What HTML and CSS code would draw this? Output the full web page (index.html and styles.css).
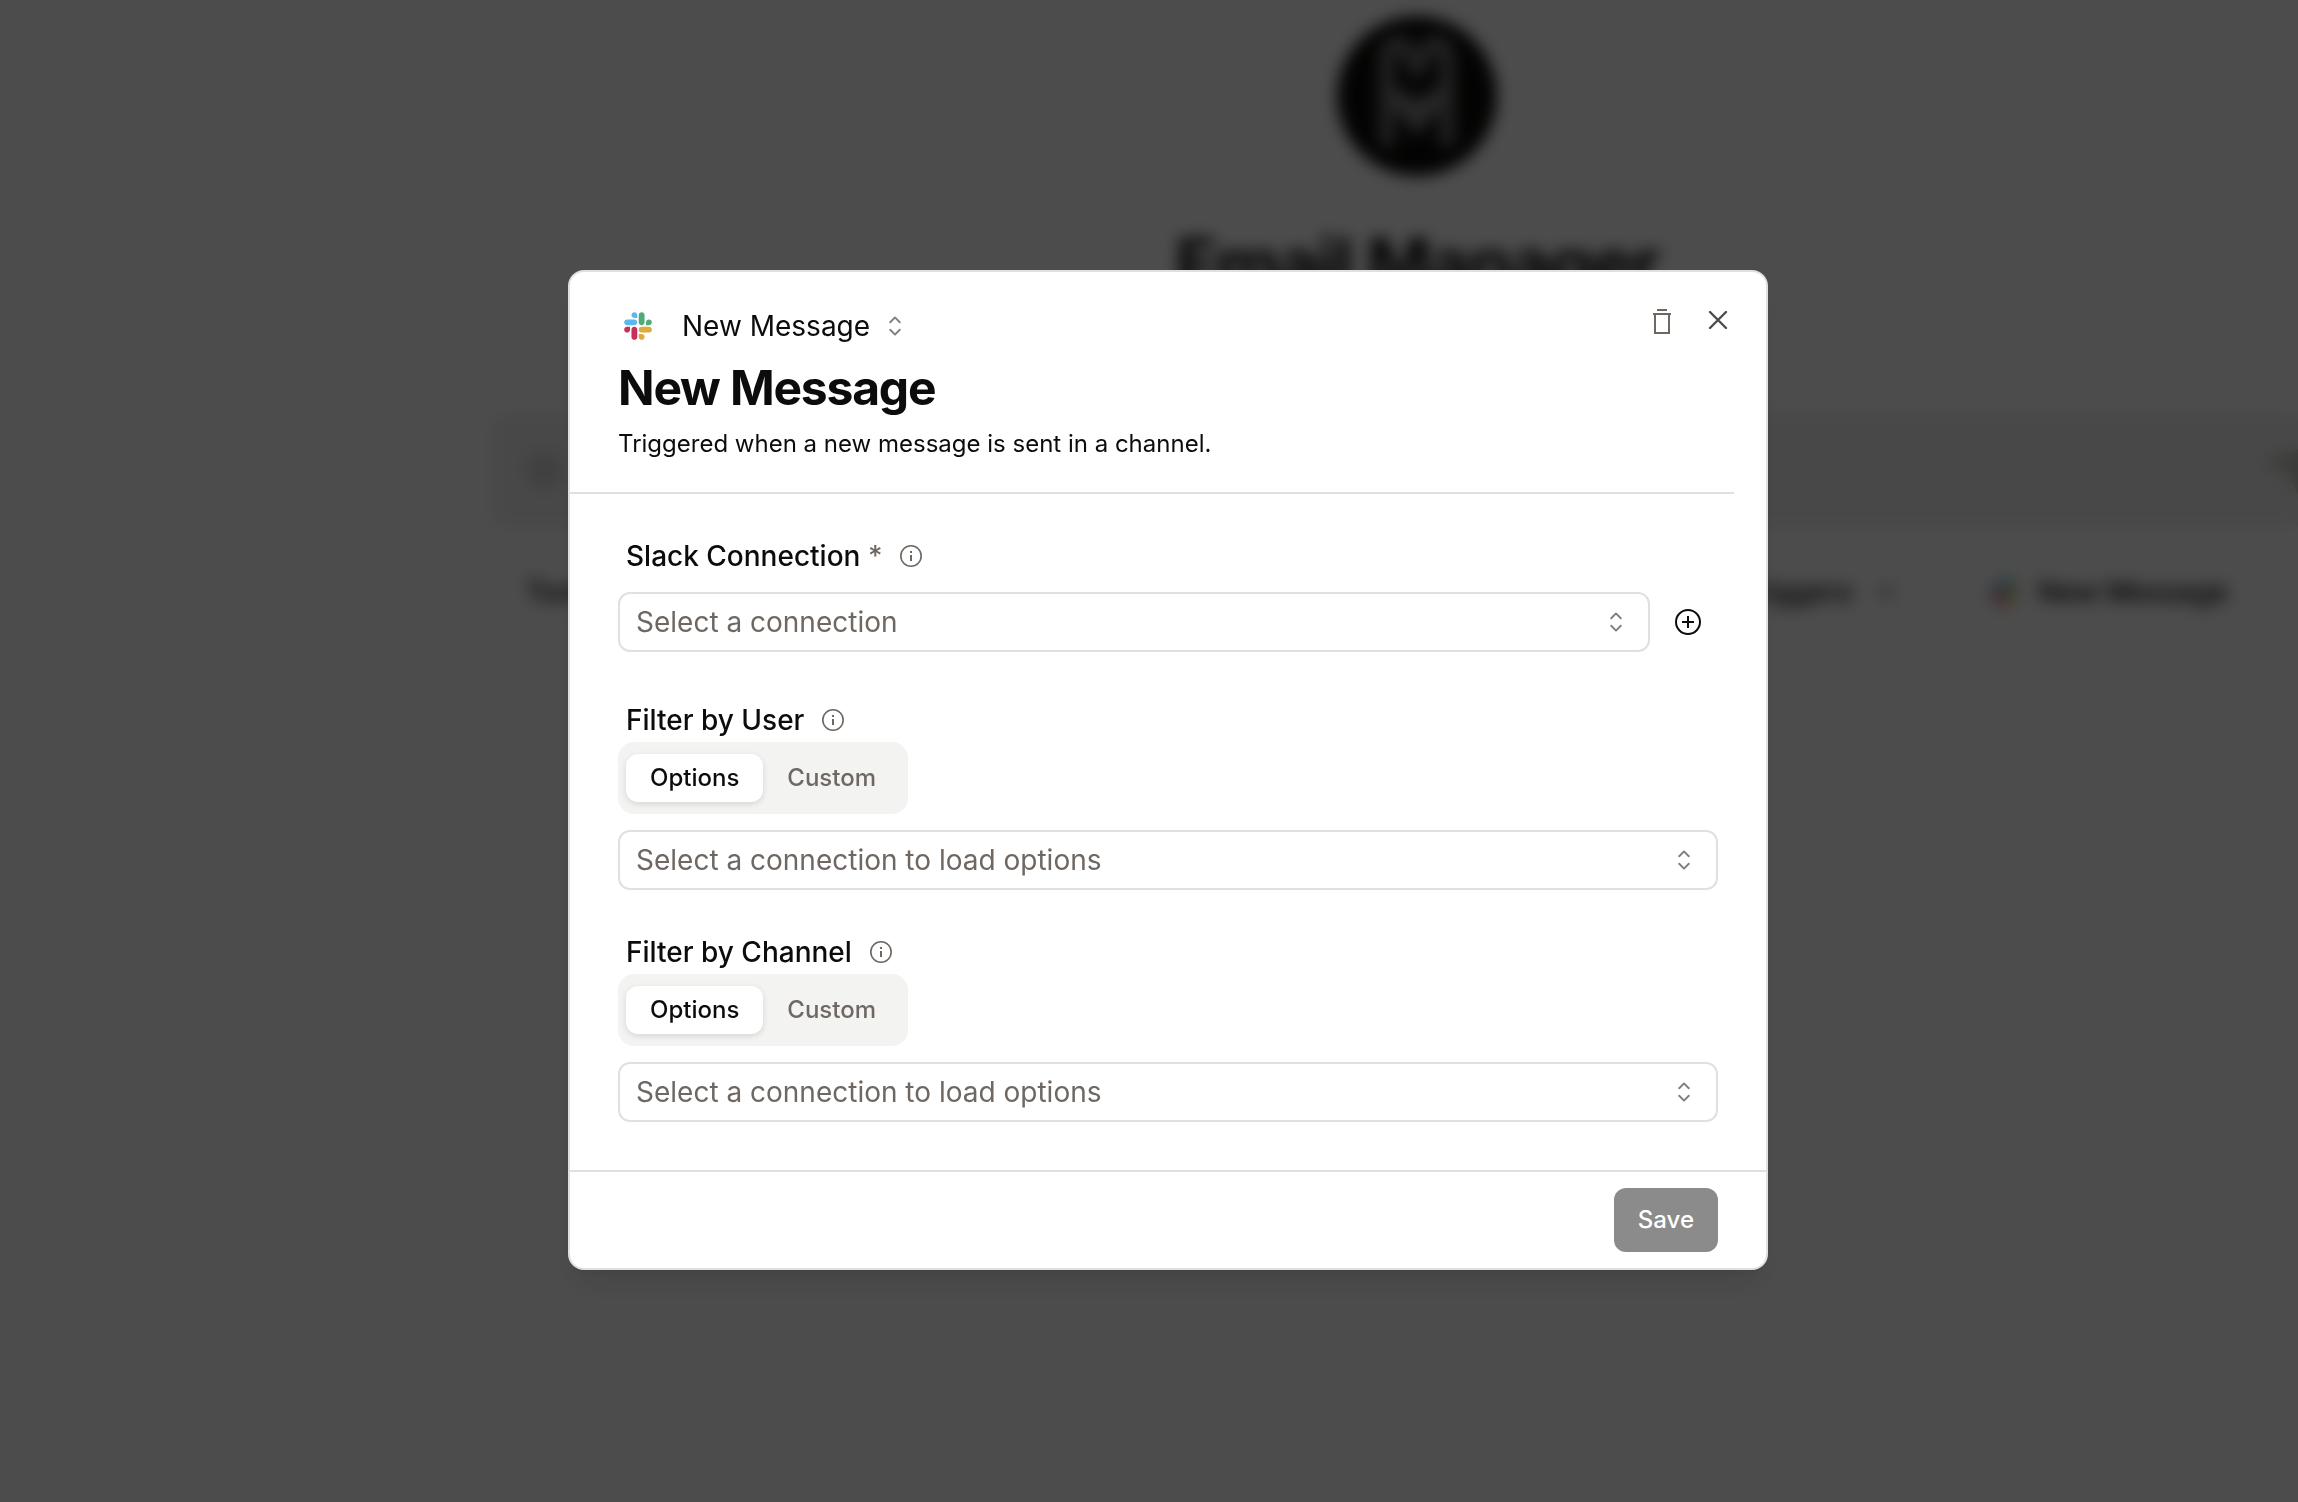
FILE: index.html
```html
<!DOCTYPE html>
<html lang="en">
<head>
<meta charset="utf-8">
<title>Email Manager</title>
<link rel="stylesheet" href="styles.css">
</head>
<body>
<svg class="sprite" aria-hidden="true">
  <symbol id="slack" viewBox="0 0 127 127">
    <path fill="#c7305b" d="M27.2 80c0 7.300-5.900 13.200-13.200 13.200C6.700 93.200.8 87.300.8 80c0-7.300 5.900-13.200 13.200-13.200h13.200V80zm6.600 0c0-7.300 5.900-13.200 13.200-13.200 7.300 0 13.200 5.900 13.200 13.200v33c0 7.300-5.900 13.200-13.200 13.200-7.300 0-13.200-5.900-13.200-13.200V80z"/>
    <path fill="#5bb9ec" d="M47 27c-7.300 0-13.200-5.900-13.200-13.200C33.800 6.500 39.700.6 47 .6c7.300 0 13.200 5.900 13.200 13.200V27H47zm0 6.700c7.300 0 13.200 5.900 13.200 13.200 0 7.300-5.900 13.200-13.200 13.200H13.900C6.600 60.100.7 54.200.7 46.900c0-7.300 5.900-13.200 13.200-13.200H47z"/>
    <path fill="#52aa75" d="M99.900 46.900c0-7.300 5.900-13.200 13.200-13.200 7.300 0 13.200 5.900 13.200 13.200 0 7.300-5.900 13.200-13.200 13.200H99.900V46.900zm-6.600 0c0 7.300-5.900 13.200-13.200 13.200-7.300 0-13.200-5.900-13.200-13.200V13.800C66.900 6.500 72.800.6 80.100.6c7.300 0 13.200 5.900 13.200 13.200v33.100z"/>
    <path fill="#dfab3c" d="M80.100 99.800c7.300 0 13.200 5.900 13.200 13.200 0 7.300-5.900 13.200-13.200 13.200-7.300 0-13.200-5.900-13.200-13.200V99.800h13.200zm0-6.600c-7.300 0-13.200-5.900-13.200-13.200 0-7.300 5.900-13.200 13.200-13.200h33.100c7.300 0 13.200 5.900 13.200 13.200 0 7.300-5.900 13.200-13.200 13.200H80.100z"/>
  </symbol>
  <symbol id="sort" viewBox="0 0 15 15">
    <path fill="currentColor" d="M4.932 5.432a.45.45 0 0 0 .636.636L7.500 4.136l1.932 1.932a.45.45 0 0 0 .636-.636l-2.250-2.250a.45.45 0 0 0-.636 0zM10.068 9.568a.45.45 0 0 0-.636-.636L7.500 10.864 5.568 8.932a.45.45 0 0 0-.636.636l2.250 2.250a.45.45 0 0 0 .636 0z"/>
  </symbol>
  <symbol id="info" viewBox="0 0 22 22">
    <circle cx="11" cy="11" r="10.200" fill="none" stroke="currentColor" stroke-width="1.600"/>
    <path fill="currentColor" d="M10 6h2v2h-2zM10 10h2v6h-2z"/>
  </symbol>
</svg>

<div class="page" inert>
  <main class="agent">
    <svg class="avatar" viewBox="0 0 160 160">
      <circle cx="80" cy="80" r="80" fill="#0c0c0a"/>
      <path d="M50 130V40Q52 24 66 28L80 52L94 28Q108 24 110 40V130" fill="none" stroke="#757575" stroke-width="15"/>
      <path d="M54 68L80 84L106 68L104 90L80 120L56 90Z" fill="#858585"/>
    </svg>
    <h1 class="agent-name">Email Manager</h1>
    <div class="prompt">
      <svg class="prompt-icon" viewBox="0 0 40 40"><circle cx="20" cy="20" r="18" fill="#d6d6d4"/></svg>
      <svg class="prompt-send" viewBox="0 0 56 56"><path d="M0 20L56 0L36 52L24 30Z" fill="#c8c8c0"/></svg>
    </div>
    <div class="chips">
      <span>Tools</span>
      <span class="chips-triggers">Triggers <svg class="chip-plus" viewBox="0 0 20 20"><path d="M10 3V17M3 10H17" stroke="#666" stroke-width="3"/></svg></span>
      <span class="chip"><svg class="slack"><use href="#slack"/></svg>New Message</span>
    </div>
  </main>
</div>

<div class="overlay">
  <form class="dialog" role="dialog" aria-modal="true" aria-labelledby="dialog-title">
    <header class="dialog-header">
      <div class="heading">
        <div class="trigger">
          <svg class="slack" aria-hidden="true"><use href="#slack"/></svg>
          <span class="picker picker-inline">
            <select aria-label="Trigger"><option>New Message</option></select>
            <svg class="sort" aria-hidden="true"><use href="#sort"/></svg>
          </span>
        </div>
        <h2 id="dialog-title">New Message</h2>
        <p>Triggered when a new message is sent in a channel.</p>
      </div>
      <div class="actions">
        <button type="button" class="icon-button trash" aria-label="Delete">
          <svg viewBox="0 0 32 32" fill="none" stroke="currentColor" stroke-width="2"><path d="M11 4H21M7 8H25M9 8V27H23V8"/></svg>
        </button>
        <button type="button" class="icon-button close" aria-label="Close">
          <svg viewBox="0 0 32 32" fill="none" stroke="currentColor" stroke-width="2.400" stroke-linecap="round"><path d="M8 8L24 24M24 8L8 24"/></svg>
        </button>
      </div>
    </header>

    <div class="fields">
      <section class="field">
        <div class="field-label"><label for="connection">Slack Connection <span class="required">*</span></label><svg class="info"><use href="#info"/></svg></div>
        <div class="connection">
          <span class="picker">
            <select id="connection"><option>Select a connection</option></select>
            <svg class="sort" aria-hidden="true"><use href="#sort"/></svg>
          </span>
          <button type="button" class="icon-button add" aria-label="Add connection">
            <svg viewBox="0 0 32 32" fill="none" stroke="currentColor" stroke-width="2"><circle cx="16" cy="16" r="12"/><path d="M16 10V22M10 16H22"/></svg>
          </button>
        </div>
      </section>

      <section class="field">
        <div class="field-label"><label for="user">Filter by User</label><svg class="info"><use href="#info"/></svg></div>
        <div class="tabs" role="tablist">
          <button type="button" role="tab" aria-selected="true">Options</button>
          <button type="button" role="tab" aria-selected="false">Custom</button>
        </div>
        <span class="picker">
          <select id="user"><option>Select a connection to load options</option></select>
          <svg class="sort" aria-hidden="true"><use href="#sort"/></svg>
        </span>
      </section>

      <section class="field">
        <div class="field-label"><label for="channel">Filter by Channel</label><svg class="info"><use href="#info"/></svg></div>
        <div class="tabs" role="tablist">
          <button type="button" role="tab" aria-selected="true">Options</button>
          <button type="button" role="tab" aria-selected="false">Custom</button>
        </div>
        <span class="picker">
          <select id="channel"><option>Select a connection to load options</option></select>
          <svg class="sort" aria-hidden="true"><use href="#sort"/></svg>
        </span>
      </section>
    </div>

    <footer class="dialog-footer">
      <button type="submit" class="save" disabled>Save</button>
    </footer>
  </form>
</div>
</body>
</html>
```

FILE: styles.css
```css
:root {
  --ink: #0c0c0c;
  --muted: #6e6762;
  --line: #e0e0e0;
  --soft: #f3f3f2;
}

* { box-sizing: border-box; }

body {
  margin: 0;
  min-height: 100vh;
  overflow: hidden;
  background: #fff;
  color: var(--ink);
  font: 400 28px/40px Inter, "Liberation Sans", sans-serif;
}

button, select {
  margin: 0;
  border: 0;
  background: none;
  color: inherit;
  font: inherit;
}

h1, h2, p { margin: 0; }
svg { display: block; flex: none; }
.sprite { position: absolute; width: 0; height: 0; }

/* Page behind the dialog */
.page { overflow: hidden; }

.agent {
  display: flex;
  flex-direction: column;
  align-items: center;
  margin: 16px -44px 0 492px;
}

.avatar { width: 160px; height: 160px; }

.agent-name {
  margin-top: 44px;
  font-size: 70px;
  font-weight: 700;
  line-height: 88px;
  letter-spacing: -0.025em;
}

.prompt {
  display: flex;
  align-items: center;
  justify-content: space-between;
  align-self: stretch;
  height: 112px;
  margin-top: 106px;
  padding: 0 24px 0 32px;
  border-radius: 16px;
  background: #f1f1f1;
}

.prompt-icon { width: 40px; height: 40px; }
.prompt-send { width: 56px; height: 56px; }

.chips {
  display: flex;
  align-items: center;
  align-self: stretch;
  margin-top: 24px;
  padding: 0 76px 0 34px;
  font-weight: 500;
}

.chips-triggers {
  display: flex;
  align-items: center;
  gap: 24px;
  margin-left: auto;
}

.chip-plus { width: 20px; height: 20px; }

.chip {
  display: flex;
  align-items: center;
  gap: 20px;
  height: 84px;
  margin-left: 52px;
  padding: 0 36px 0 40px;
  border: 2px solid #e8e8e8;
  border-radius: 20px;
}

/* Overlay and dialog */
.overlay {
  position: fixed;
  inset: 0;
  display: grid;
  place-items: center;
  padding: 38px 0 0 38px;
  background: rgba(0, 0, 0, 0.7);
  backdrop-filter: blur(8px);
}

.dialog {
  width: 100%;
  max-width: 1200px;
  border: 2px solid var(--line);
  border-radius: 16px;
  background: #fff;
  box-shadow: 0 20px 30px -6px rgba(0, 0, 0, 0.1), 0 8px 12px -8px rgba(0, 0, 0, 0.1);
}

.dialog-header {
  display: flex;
  justify-content: space-between;
  margin-right: 32px;
  padding: 32px 0 30px 48px;
  border-bottom: 2px solid var(--line);
}

.trigger {
  display: flex;
  align-items: center;
  gap: 30px;
  height: 44px;
  padding-left: 6px;
}

.slack { width: 28px; height: 28px; }

h2 {
  margin-top: 16px;
  font-size: 48px;
  font-weight: 700;
  line-height: 48px;
  letter-spacing: -0.025em;
}

.heading p {
  margin-top: 14px;
  font-size: 24px;
  line-height: 36px;
}

.actions {
  display: flex;
  align-items: flex-start;
  gap: 24px;
}

.icon-button {
  width: 32px;
  height: 32px;
  padding: 0;
}

.trash { margin-top: 2px; color: var(--muted); }
.close { color: #4d4d4d; }

/* Drop-downs: the caret shares the select's grid cell */
.picker {
  display: grid;
  flex: 1;
  align-items: center;
}

.picker > * { grid-area: 1 / 1; }

.picker select {
  appearance: none;
  height: 60px;
  padding: 0 56px 0 16px;
  border: 2px solid var(--line);
  border-radius: 12px;
  color: var(--muted);
}

.picker-inline { flex: none; }

.picker-inline select {
  height: 40px;
  padding: 0 40px 0 0;
  border: 0;
  color: var(--ink);
}

.sort {
  justify-self: end;
  width: 32px;
  height: 32px;
  margin-right: 18px;
  opacity: 0.5;
  color: #000;
  pointer-events: none;
}

.picker-inline .sort { margin-right: 0; }

/* Fields */
.fields {
  display: grid;
  gap: 42px;
  padding: 42px 48px 48px;
}

.field-label {
  display: flex;
  align-items: center;
  gap: 18px;
  padding-left: 8px;
  font-weight: 500;
}

.required { color: var(--muted); }
.info { width: 22px; height: 22px; color: var(--muted); }

.connection {
  display: flex;
  align-items: center;
  gap: 22px;
  padding: 16px 14px 6px 0;
}

.field > .picker { margin-top: 16px; }

.tabs {
  display: flex;
  align-items: center;
  width: fit-content;
  height: 72px;
  margin-top: 2px;
  padding: 0 8px;
  border-radius: 16px;
  background: var(--soft);
}

.tabs button {
  height: 48px;
  padding: 0 24px;
  border-radius: 12px;
  color: var(--muted);
  font-size: 24px;
  font-weight: 500;
  line-height: 32px;
}

.tabs [aria-selected="true"] {
  background: #fff;
  box-shadow: 0 2px 6px rgba(0, 0, 0, 0.12);
  color: var(--ink);
}

.dialog-footer {
  display: flex;
  justify-content: flex-end;
  padding: 16px 48px;
  border-top: 2px solid var(--line);
}

.save {
  height: 64px;
  padding: 0 24px;
  border-radius: 12px;
  background: #8b8b8b;
  color: #fff;
  font-size: 24px;
  font-weight: 500;
  line-height: 32px;
}
```
